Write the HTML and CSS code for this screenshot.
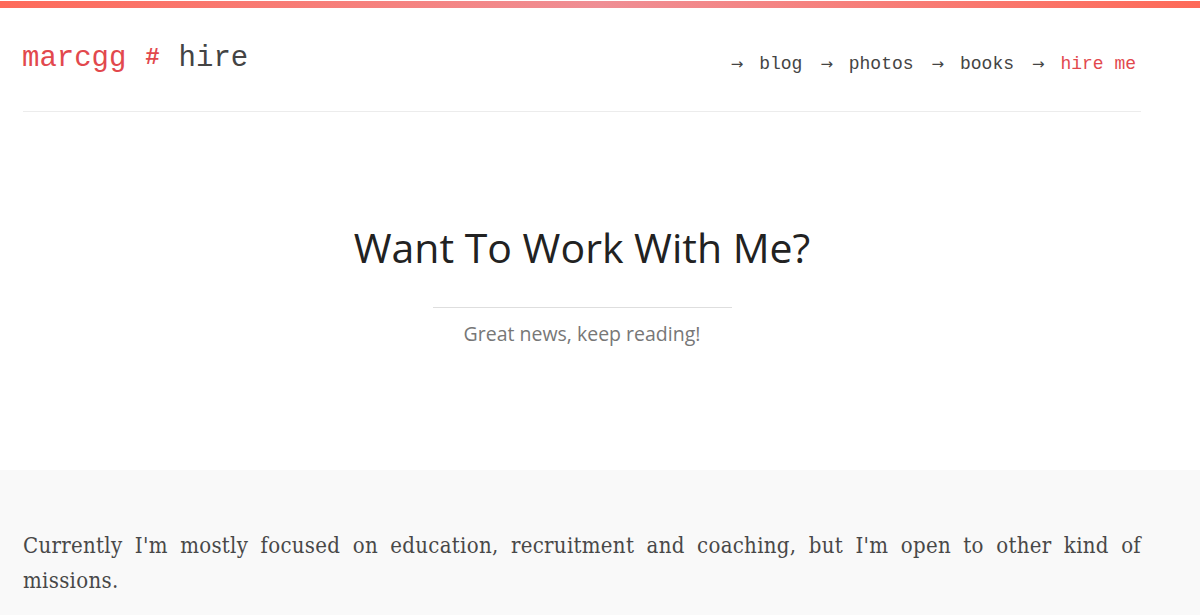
FILE: index.html
```html
<!DOCTYPE html>
<html lang="en">
<head>
<meta charset="utf-8">
<title>marcgg # hire</title>
<link rel="stylesheet" href="styles.css">
</head>
<body>
<div class="topbar"></div>
<div class="wrap">
  <header class="header">
    <a class="logo" href="#"><span class="logo-red">marcgg <span class="hash">#</span></span> hire</a>
    <nav class="nav">
      <a class="nav-link" href="#"><span class="arrow">→</span> blog</a>
      <a class="nav-link" href="#"><span class="arrow">→</span> photos</a>
      <a class="nav-link" href="#"><span class="arrow">→</span> books</a>
      <a class="nav-link" href="#"><span class="arrow">→</span> <span class="active">hire me</span></a>
    </nav>
  </header>
  <section class="hero">
    <h1 class="hero-title">Want To Work With Me?</h1>
    <hr class="hero-rule">
    <p class="hero-sub">Great news, keep reading!</p>
  </section>
</div>
<section class="content">
  <div class="wrap">
    <p class="text">Currently I'm mostly focused on education, recruitment and coaching, but I'm open to other kind of missions.</p>
  </div>
</section>
</body>
</html>
```

FILE: styles.css
```css
* { box-sizing: border-box; }
html, body { margin: 0; padding: 0; background: #fff; }
body { font-family: "Open Sans", sans-serif; color: #222; }
a { text-decoration: none; }

.topbar {
  height: 8px;
  border-top: 1px solid #fff;
  background: linear-gradient(to right, #fe6a5a 0%, #f6807c 30%, #ef8e94 50%, #f6807c 70%, #fe6a58 100%);
}

.wrap {
  width: 1118px;
  margin-left: 23px;
}

.header {
  display: flex;
  justify-content: space-between;
  align-items: flex-start;
  height: 104px;
  border-bottom: 1px solid #ececec;
}

.logo {
  font-family: "Liberation Mono", monospace;
  font-size: 29px;
  color: #444;
  margin-top: 33px;
  margin-left: -1px;
  line-height: 34px;
}
.logo-red { color: #e2484d; }
.hash { font-size: 24px; font-weight: 700; display: inline-block; width: 17.4px; text-align: center; vertical-align: 2px; }

.nav {
  display: flex;
  gap: 18px;
  margin-top: 44px;
  margin-right: 5px;
  font-family: "Liberation Mono", monospace;
  font-size: 18px;
  line-height: 24px;
}
.nav-link { color: #444; }
.arrow { font-family: "DejaVu Sans", sans-serif; font-size: 15px; margin-right: 5px; }
.active { color: #e2484d; }

.hero {
  display: flex;
  flex-direction: column;
  align-items: center;
  height: 358px;
  padding-top: 110px;
}
.hero-title {
  margin: 0;
  font-family: "Open Sans", sans-serif;
  font-weight: 400;
  font-size: 41px;
  line-height: 50px;
  color: #222;
}
.hero-rule {
  width: 299px;
  border: 0;
  border-top: 1px solid #dedede;
  margin: 35px 0 0;
}
.hero-sub {
  margin: 12px 0 0;
  font-size: 19.5px;
  line-height: 28px;
  color: #777;
}

.content {
  background: #f9f9f9;
  padding-top: 58px;
  padding-bottom: 40px;
}
.text {
  margin: 0;
  font-family: "DejaVu Serif Condensed", "DejaVu Serif", serif;
  font-stretch: condensed;
  font-size: 22px;
  line-height: 35px;
  color: #484848;
  text-align: justify;
  letter-spacing: 0.3px;
  word-spacing: 1px;
}
```
